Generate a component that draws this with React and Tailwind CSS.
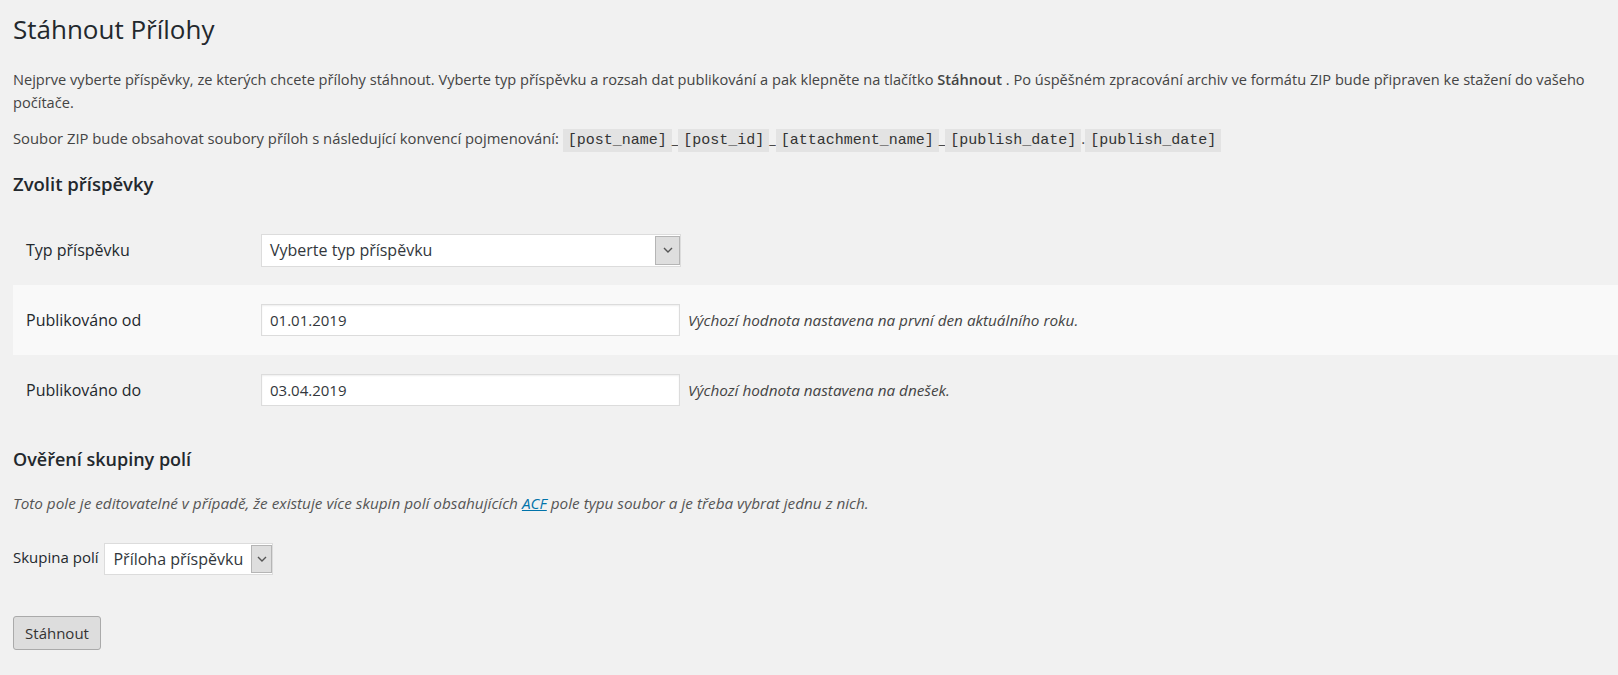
import React from 'react';

const Chevron = () => (
  <svg width="10" height="6" viewBox="0 0 10 6" fill="none">
    <path d="M1 1l4 4 4-4" stroke="#555" strokeWidth="1.4" />
  </svg>
);

const FakeSelect = ({ value, className }) => (
  <div className={`flex items-stretch bg-white border border-[#dcdcdc] ${className}`}>
    <span className="flex-1 pl-[8px] pr-2 flex items-center text-[16px] text-[#32373c] whitespace-nowrap">{value}</span>
    <span className="w-[25px] my-[1px] bg-[#dedede] border border-[#b5b5b5] flex items-center justify-center">
      <Chevron />
    </span>
  </div>
);

const Code = ({ children }) => (
  <code className="bg-[#e3e3e3] px-[5px] py-[3px] font-['Liberation_Mono',monospace] text-[15px] text-[#333]">{children}</code>
);

const rows = [
  { label: 'Typ příspěvku', kind: 'select', value: 'Vyberte typ příspěvku' },
  { label: 'Publikováno od', kind: 'input', value: '01.01.2019', hint: 'Výchozí hodnota nastavena na první den aktuálního roku.' },
  { label: 'Publikováno do', kind: 'input', value: '03.04.2019', hint: 'Výchozí hodnota nastavena na dnešek.' },
];

export default function App() {
  return (
    <div className="min-h-screen bg-[#f1f1f1] font-['Open_Sans',sans-serif] text-[#444] text-[15px] pl-[13px] pb-10 overflow-hidden">
      <h1 className="pt-[12px] text-[26px] leading-[34px] text-[#23282d] font-normal">Stáhnout Přílohy</h1>

      <p className="mt-[22px] leading-[23px] text-[14.6px]">
        Nejprve vyberte příspěvky, ze kterých chcete přílohy stáhnout. Vyberte typ příspěvku a rozsah dat publikování a pak klepněte na tlačítko <b className="font-semibold">Stáhnout</b> . Po úspěšném zpracování archiv ve formátu ZIP bude připraven ke stažení do vašeho počítače.
      </p>

      <p className="mt-[12px] leading-[24px] text-[14.8px]">
        Soubor ZIP bude obsahovat soubory příloh s následující konvencí pojmenování: <Code>[post_name]</Code>_<Code>[post_id]</Code>_<Code>[attachment_name]</Code>_<Code>[publish_date]</Code>.<Code>[publish_date]</Code>
      </p>

      <h2 className="mt-[19px] text-[18.5px] leading-[24px] font-semibold text-[#23282d]">Zvolit příspěvky</h2>

      <div className="mt-[19px]">
        {rows.map((r, i) => (
          <div key={i} className={`flex items-center h-[70px] ${i === 1 ? 'bg-[#f9f9f9]' : ''}`}>
            <div className="w-[248px] pl-[13px] text-[16px] text-[#23282d]">{r.label}</div>
            {r.kind === 'select' ? (
              <FakeSelect value={r.value} className="w-[420px] h-[33px]" />
            ) : (
              <>
                <div className="w-[419px] h-[32px] bg-white border border-[#dcdcdc] shadow-[inset_0_1px_2px_rgba(0,0,0,0.07)] pl-[8px] flex items-center text-[15px] text-[#32373c]">{r.value}</div>
                <span className="ml-[8px] italic text-[15.3px] text-[#444]">{r.hint}</span>
              </>
            )}
          </div>
        ))}
      </div>

      <h2 className="mt-[22px] text-[18px] leading-[24px] font-semibold text-[#23282d]">Ověření skupiny polí</h2>

      <p className="mt-[21px] leading-[23px] italic text-[15.3px] text-[#555]">
        Toto pole je editovatelné v případě, že existuje více skupin polí obsahujících <a className="text-[#0073aa] underline" href="#">ACF</a> pole typu soubor a je třeba vybrat jednu z nich.
      </p>

      <div className="mt-[28px] flex items-start">
        <span className="mt-[3px] text-[#23282d]">Skupina polí</span>
        <FakeSelect value="Příloha příspěvku" className="ml-[6px] w-[169px] h-[32px]" />
      </div>

      <button className="mt-[41px] w-[88px] h-[34px] bg-[#dddddd] border border-[#aaaaaa] rounded-[3px] text-[#333] text-[15px]">Stáhnout</button>
    </div>
  );
}
